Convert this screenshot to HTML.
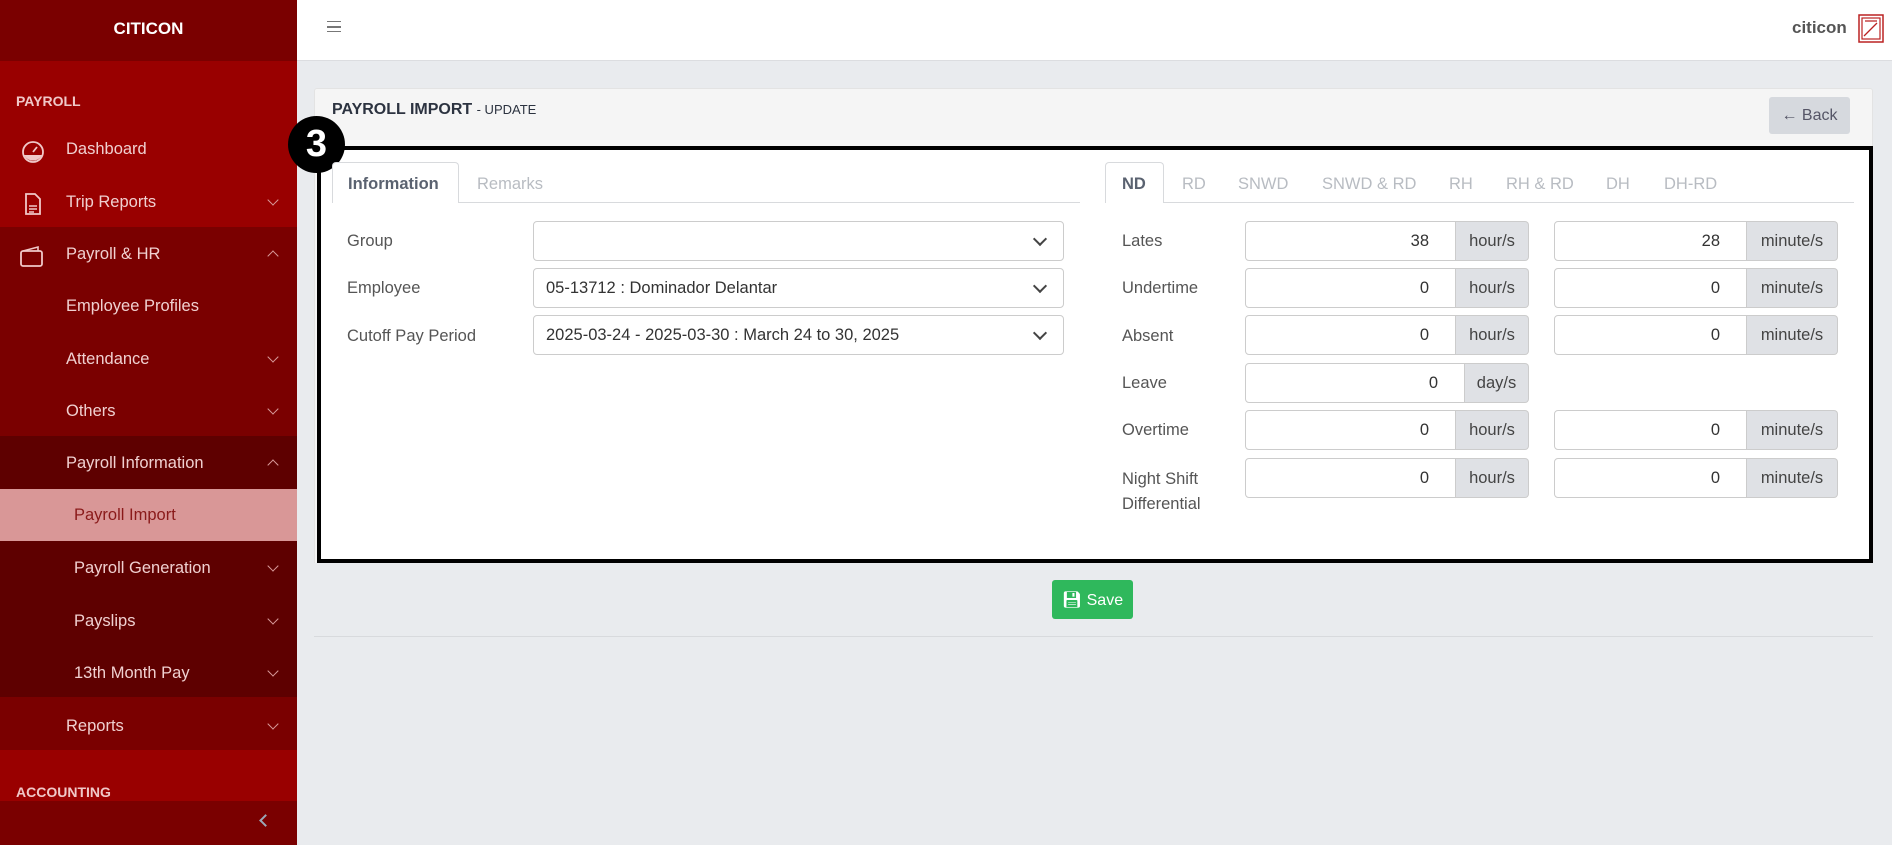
<!DOCTYPE html>
<html><head><meta charset="utf-8"><style>
*{box-sizing:border-box;margin:0;padding:0}
body{width:1892px;height:845px;overflow:hidden;background:#e9ebee;font-family:"Liberation Sans",sans-serif;position:relative;color:#333}
.abs{position:absolute}
#sb{left:0;top:0;width:297px;height:845px;background:#7a0000}
.sec{position:absolute;left:0;width:297px}
.it{position:absolute;left:66px;font-size:16.5px;color:#f0d0d0}
.chev{position:absolute;left:269px;width:8px;height:8px;border-right:1px solid #d89a9a;border-bottom:1px solid #d89a9a;transform:rotate(45deg)}
.chev.up{transform:rotate(-135deg)}
.lbl{font-size:16.5px;color:#555;position:absolute}
.sel{position:absolute;height:40px;border:1px solid #ccc;border-radius:4px;background:#fff;font-size:16.5px;color:#333;padding:10px 12px}
.sel:after{content:"";position:absolute;right:18px;top:12px;width:8px;height:8px;border-right:2px solid #444;border-bottom:2px solid #444;transform:rotate(45deg)}
.inp{position:absolute;height:40px;border:1px solid #ccc;border-radius:4px 0 0 4px;background:#fff;font-size:16.5px;text-align:right;padding:10px 26px 0 0;color:#333}
.add{position:absolute;height:40px;border:1px solid #ccc;border-left:none;border-radius:0 4px 4px 0;background:#dfe1e5;font-size:16.5px;color:#444;text-align:center;padding-top:10px}
.tab{position:absolute;font-size:16.5px;color:#b8bcc2;top:175px}
</style></head><body>
<div id="sb" class="abs">
 <div class="sec" style="top:0;height:61px;background:#7a0000"></div>
 <div class="abs" style="left:0;width:297px;top:19px;text-align:center;color:#fff;font-weight:bold;font-size:17px">CITICON</div>
 <div class="sec" style="top:61px;height:166px;background:#990000"></div>
 <div class="abs" style="left:16px;top:93px;color:#f0c8c8;font-weight:bold;font-size:14px">PAYROLL</div>
 <svg class="abs" style="left:21px;top:141px" width="24" height="22" viewBox="0 0 24 22"><circle cx="12" cy="11" r="10" fill="none" stroke="#f0c8c8" stroke-width="1.8"/><path d="M3 14h18a10 10 0 0 1-18 0z" fill="#f0c8c8"/><path d="M12 11l4-5" stroke="#f0c8c8" stroke-width="1.8"/></svg>
 <div class="it" style="top:140px">Dashboard</div>
 <svg class="abs" style="left:24px;top:192px" width="18" height="24" viewBox="0 0 18 24"><path d="M2 2h9l5 5v15H2z" fill="none" stroke="#f0c8c8" stroke-width="1.8"/><path d="M5 14h8M5 17h8M5 20h5" stroke="#f0c8c8" stroke-width="1.5"/></svg>
 <div class="it" style="top:193px">Trip Reports</div><div class="chev" style="top:196px"></div>
 <svg class="abs" style="left:20px;top:245px" width="24" height="22" viewBox="0 0 24 22"><rect x="1" y="6" width="21" height="15" rx="2" fill="none" stroke="#f0c8c8" stroke-width="1.8"/><path d="M3 6l15-4v4" fill="none" stroke="#f0c8c8" stroke-width="1.6"/></svg>
 <div class="it" style="top:245px">Payroll &amp; HR</div><div class="chev up" style="top:252px"></div>
 <div class="it" style="top:297px">Employee Profiles</div>
 <div class="it" style="top:350px">Attendance</div><div class="chev" style="top:353px"></div>
 <div class="it" style="top:402px">Others</div><div class="chev" style="top:405px"></div>
 <div class="sec" style="top:436px;height:261px;background:#5e0000"></div>
 <div class="it" style="top:454px">Payroll Information</div><div class="chev up" style="top:461px"></div>
 <div class="sec" style="top:489px;height:52px;background:#d99797"></div>
 <div class="it" style="top:506px;left:74px;color:#8a1a1a">Payroll Import</div>
 <div class="it" style="top:559px;left:74px">Payroll Generation</div><div class="chev" style="top:562px"></div>
 <div class="it" style="top:612px;left:74px">Payslips</div><div class="chev" style="top:615px"></div>
 <div class="it" style="top:664px;left:74px">13th Month Pay</div><div class="chev" style="top:667px"></div>
 <div class="it" style="top:717px">Reports</div><div class="chev" style="top:720px"></div>
 <div class="sec" style="top:750px;height:51px;background:#990000"></div>
 <div class="abs" style="left:16px;top:784px;color:#f0c8c8;font-weight:bold;font-size:14px">ACCOUNTING</div>
 <div class="abs" style="left:261px;top:816px;width:9px;height:9px;border-left:2.5px solid #9aa8b8;border-bottom:2.5px solid #9aa8b8;transform:rotate(45deg)"></div>
</div>
<div class="abs" style="left:297px;top:0;width:1595px;height:61px;background:#fff;border-bottom:1px solid #dcdde0"></div>
<div class="abs" style="left:327px;top:21px;width:14px;height:11px;border-top:1.5px solid #777;border-bottom:1.5px solid #777"></div>
<div class="abs" style="left:327px;top:26px;width:14px;height:1.5px;background:#777"></div>
<div class="abs" style="left:1792px;top:18px;font-weight:bold;font-size:17px;color:#555">citicon</div>
<svg class="abs" style="left:1858px;top:14px" width="26" height="29" viewBox="0 0 26 29"><rect x="1" y="1" width="24" height="27" fill="#fff" stroke="#b22" stroke-width="1.5"/><rect x="4" y="4" width="18" height="21" fill="none" stroke="#b22" stroke-width="1.2"/><path d="M6 22L19 9M7 7h12" stroke="#b22" stroke-width="1.3"/></svg>

<div class="abs" style="left:314px;top:88px;width:1559px;height:540px;background:#f5f5f5;border:1px solid #e3e3e3;border-radius:3px"></div>
<div class="abs" style="left:332px;top:101px;font-size:16px;font-weight:bold;color:#2c3340">PAYROLL IMPORT <span style="font-weight:normal;font-size:13px">- UPDATE</span></div>
<div class="abs" style="left:1769px;top:97px;width:81px;height:37px;background:#d6d9de;border-radius:3px;color:#556;font-size:16px;padding-top:10px;text-align:center">&#8592; Back</div>

<div class="abs" style="left:317px;top:146px;width:1556px;height:417px;background:#fff;border:4px solid #000"></div>
<div class="abs" style="left:288px;top:116px;width:57px;height:57px;border-radius:50%;background:#000;color:#fff;font-weight:bold;font-size:38px;text-align:center;line-height:56px">3</div>

<div class="abs" style="left:332px;top:202px;width:748px;height:1px;background:#d8dadd"></div>
<div class="abs" style="left:332px;top:162px;width:127px;height:41px;background:#fff;border:1px solid #d8dadd;border-bottom:none;border-radius:4px 4px 0 0"></div>
<div class="abs" style="left:348px;top:175px;font-size:16.5px;font-weight:bold;color:#5a6270">Information</div>
<div class="tab" style="left:477px">Remarks</div>
<div class="lbl" style="left:347px;top:232px">Group</div>
<div class="sel" style="left:533px;top:221px;width:531px"></div>
<div class="lbl" style="left:347px;top:279px">Employee</div>
<div class="sel" style="left:533px;top:268px;width:531px">05-13712 : Dominador Delantar</div>
<div class="lbl" style="left:347px;top:327px">Cutoff Pay Period</div>
<div class="sel" style="left:533px;top:315px;width:531px">2025-03-24 - 2025-03-30 : March 24 to 30, 2025</div>

<div class="abs" style="left:1105px;top:202px;width:749px;height:1px;background:#d8dadd"></div>
<div class="abs" style="left:1105px;top:162px;width:59px;height:41px;background:#fff;border:1px solid #d8dadd;border-bottom:none;border-radius:4px 4px 0 0"></div>
<div class="abs" style="left:1122px;top:175px;font-size:16.5px;font-weight:bold;color:#5a6270">ND</div>
<div class="tab" style="left:1182px">RD</div><div class="tab" style="left:1238px">SNWD</div><div class="tab" style="left:1322px">SNWD &amp; RD</div><div class="tab" style="left:1449px">RH</div><div class="tab" style="left:1506px">RH &amp; RD</div><div class="tab" style="left:1606px">DH</div><div class="tab" style="left:1664px">DH-RD</div>

<div class="lbl" style="left:1122px;top:232px">Lates</div>
<div class="inp" style="left:1245px;top:221px;width:211px">38</div><div class="add" style="left:1456px;top:221px;width:73px">hour/s</div>
<div class="inp" style="left:1554px;top:221px;width:193px">28</div><div class="add" style="left:1747px;top:221px;width:91px">minute/s</div>
<div class="lbl" style="left:1122px;top:279px">Undertime</div>
<div class="inp" style="left:1245px;top:268px;width:211px">0</div><div class="add" style="left:1456px;top:268px;width:73px">hour/s</div>
<div class="inp" style="left:1554px;top:268px;width:193px">0</div><div class="add" style="left:1747px;top:268px;width:91px">minute/s</div>
<div class="lbl" style="left:1122px;top:327px">Absent</div>
<div class="inp" style="left:1245px;top:315px;width:211px">0</div><div class="add" style="left:1456px;top:315px;width:73px">hour/s</div>
<div class="inp" style="left:1554px;top:315px;width:193px">0</div><div class="add" style="left:1747px;top:315px;width:91px">minute/s</div>
<div class="lbl" style="left:1122px;top:374px">Leave</div>
<div class="inp" style="left:1245px;top:363px;width:220px">0</div><div class="add" style="left:1465px;top:363px;width:64px">day/s</div>
<div class="lbl" style="left:1122px;top:421px">Overtime</div>
<div class="inp" style="left:1245px;top:410px;width:211px">0</div><div class="add" style="left:1456px;top:410px;width:73px">hour/s</div>
<div class="inp" style="left:1554px;top:410px;width:193px">0</div><div class="add" style="left:1747px;top:410px;width:91px">minute/s</div>
<div class="lbl" style="left:1122px;top:467px;line-height:25px">Night Shift<br>Differential</div>
<div class="inp" style="left:1245px;top:458px;width:211px">0</div><div class="add" style="left:1456px;top:458px;width:73px">hour/s</div>
<div class="inp" style="left:1554px;top:458px;width:193px">0</div><div class="add" style="left:1747px;top:458px;width:91px">minute/s</div>

<div class="abs" style="left:314px;top:563px;width:1559px;height:84px;background:#e9ebee"></div>
<div class="abs" style="left:314px;top:636px;width:1559px;height:1px;background:#d8dadd"></div>
<div class="abs" style="left:1052px;top:580px;width:81px;height:39px;background:#2fb85c;border-radius:3px;color:#fff;font-size:16px;padding-top:10px;text-align:center">&#128190;&#xFE0E; Save</div>
</body></html>
